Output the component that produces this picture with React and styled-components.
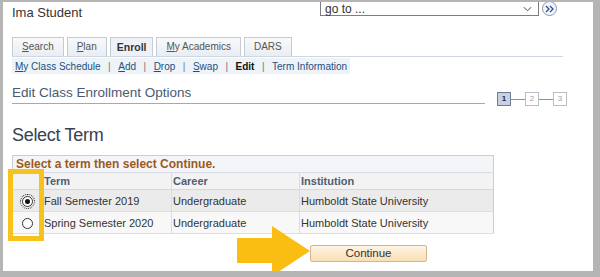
import React from "react";
import styled, { createGlobalStyle } from "styled-components";

const GlobalStyle = createGlobalStyle`
  html, body {
    margin: 0;
    padding: 0;
    background: #ffffff;
  }
  body {
    font-family: "Liberation Sans", Arial, sans-serif;
  }
`;

const TABS = [
  { label: "Search", key: "S" },
  { label: "Plan", key: "P" },
  { label: "Enroll", active: true },
  { label: "My Academics", key: "M" },
  { label: "DARS" },
];

const LINKS = [
  { label: "My Class Schedule", key: "M" },
  { label: "Add", key: "A" },
  { label: "Drop", key: "D" },
  { label: "Swap", key: "S" },
  { label: "Edit", current: true },
  { label: "Term Information" },
];

const TERMS = [
  {
    term: "Fall Semester 2019",
    career: "Undergraduate",
    institution: "Humboldt State University",
    checked: true,
  },
  {
    term: "Spring Semester 2020",
    career: "Undergraduate",
    institution: "Humboldt State University",
  },
];

function AccessLabel({ label, accessKey }) {
  if (!accessKey) return label;
  return (
    <>
      <u>{label.slice(0, 1)}</u>
      {label.slice(1)}
    </>
  );
}

function App() {
  return (
    <>
      <GlobalStyle />
      <Frame>
        <TopBar>
          <UserName>Ima Student</UserName>
          <GoToGroup>
            <GoTo>
              <span>go to ...</span>
              <Chevron viewBox="0 0 10 6">
                <path d="M1 1 L5 5 L9 1" fill="none" stroke="#444" strokeWidth="1.1" />
              </Chevron>
            </GoTo>
            <GoButton>
              <svg width="10" height="8" viewBox="0 0 10 8">
                <path
                  d="M1 1 L4 4 L1 7 M5 1 L8 4 L5 7"
                  fill="none"
                  stroke="#2f4f8f"
                  strokeWidth="1.3"
                />
              </svg>
            </GoButton>
          </GoToGroup>
        </TopBar>

        <TabStrip>
          {TABS.map((t) => (
            <Tab key={t.label} $active={t.active}>
              <AccessLabel label={t.label} accessKey={t.key} />
            </Tab>
          ))}
        </TabStrip>

        <SubNav>
          {LINKS.map((l, i) => (
            <React.Fragment key={l.label}>
              {i > 0 && <Sep>|</Sep>}
              <NavLink $current={l.current}>
                <AccessLabel label={l.label} accessKey={l.key} />
              </NavLink>
            </React.Fragment>
          ))}
        </SubNav>

        <TitleRow>
          <PageTitle>Edit Class Enrollment Options</PageTitle>
          <Steps>
            <Step $active>1</Step>
            <StepLine />
            <Step>2</Step>
            <StepLine />
            <Step>3</Step>
          </Steps>
        </TitleRow>

        <SectionTitle>Select Term</SectionTitle>

        <TermTable>
          <colgroup>
            <col style={{ width: 30 }} />
            <col style={{ width: 129 }} />
            <col style={{ width: 128 }} />
            <col />
          </colgroup>
          <thead>
            <tr>
              <Caption colSpan={4}>Select a term then select Continue.</Caption>
            </tr>
            <tr>
              <Th />
              <Th>Term</Th>
              <Th>Career</Th>
              <Th>Institution</Th>
            </tr>
          </thead>
          <tbody>
            {TERMS.map((r, i) => (
              <Row key={r.term} $odd={i % 2 === 0}>
                <RadioCell>
                  <Radio $checked={r.checked} $focus={r.checked} />
                </RadioCell>
                <Td>{r.term}</Td>
                <Td>{r.career}</Td>
                <Td>{r.institution}</Td>
              </Row>
            ))}
          </tbody>
        </TermTable>

        <ButtonRow>
          <ContinueButton>Continue</ContinueButton>
        </ButtonRow>

        <Highlight />
        <Arrow viewBox="0 0 73 50">
          <polygon points="0,12 35,12 35,0 73,25 35,50 35,37 0,37" fill="#fabd12" />
        </Arrow>
      </Frame>
    </>
  );
}

export default App;

const Frame = styled.div`
  position: relative;
  width: 600px;
  height: 277px;
  box-sizing: border-box;
  border-style: solid;
  border-color: #b5b5b5;
  border-width: 2px 7px 6px 3px;
  padding-left: 9px;
  overflow: hidden;
  color: #333;
`;

const TopBar = styled.div`
  display: flex;
  justify-content: space-between;
  align-items: flex-start;
  height: 20px;
  padding-right: 36px;
`;

const UserName = styled.div`
  font-size: 13px;
  line-height: 16px;
  margin-top: 3px;
  color: #333;
`;

const GoToGroup = styled.div`
  display: flex;
  align-items: center;
  gap: 3px;
  margin-top: -1px;
`;

const GoTo = styled.div`
  display: flex;
  align-items: center;
  justify-content: space-between;
  width: 219px;
  height: 15px;
  box-sizing: border-box;
  border: 1px solid #7d7d7d;
  padding: 0 6px 0 4px;
  font-size: 12px;
  color: #333;
  background: #fff;
`;

const Chevron = styled.svg`
  width: 9px;
  height: 6px;
`;

const GoButton = styled.div`
  display: flex;
  align-items: center;
  justify-content: center;
  width: 15px;
  height: 15px;
  border-radius: 50%;
  border: 1px solid #8a97ad;
  box-sizing: border-box;
  background: #f4f6fa;
`;

const TabStrip = styled.div`
  display: flex;
  gap: 3px;
  width: 551px;
  margin-top: 15px;
  border-bottom: 1px solid #cdd6e1;
`;

const Tab = styled.div`
  height: 19px;
  box-sizing: border-box;
  padding: ${(p) => (p.$active ? "0 6px" : "0 9px")};
  border: 1px solid #c5cbd3;
  border-bottom: none;
  background: ${(p) => (p.$active ? "#eef2f8" : "linear-gradient(#f8f9fb, #e9edf2)")};
  font-size: ${(p) => (p.$active ? "10.5px" : "10px")};
  font-weight: ${(p) => (p.$active ? "bold" : "normal")};
  color: ${(p) => (p.$active ? "#333" : "#555")};
  line-height: 18px;
  white-space: nowrap;
`;

const SubNav = styled.div`
  display: flex;
  align-items: center;
  width: 338px;
  height: 16px;
  margin-top: 1px;
  padding-left: 3px;
  box-sizing: border-box;
  background: #eef3f8;
  font-size: 10px;
  white-space: nowrap;
`;

const NavLink = styled.span`
  color: ${(p) => (p.$current ? "#111" : "#1d4e80")};
  font-weight: ${(p) => (p.$current ? "bold" : "normal")};
`;

const Sep = styled.span`
  color: #777;
  margin: 0 7.5px;
`;

const TitleRow = styled.div`
  display: flex;
  align-items: flex-start;
  margin-top: 11px;
`;

const PageTitle = styled.div`
  width: 473px;
  font-size: 13.5px;
  line-height: 16px;
  padding-bottom: 2px;
  border-bottom: 1px solid #a9a9a9;
  color: #4a5a70;
`;

const Steps = styled.div`
  display: flex;
  align-items: center;
  margin-left: 12px;
  margin-top: 7px;
`;

const Step = styled.div`
  width: 14px;
  height: 14px;
  box-sizing: border-box;
  border: 1px solid ${(p) => (p.$active ? "#6d7b93" : "#b9bec6")};
  background: ${(p) => (p.$active ? "#c7d1e1" : "#fff")};
  color: ${(p) => (p.$active ? "#1c2a44" : "#9aa0a8")};
  font-size: 8px;
  font-weight: ${(p) => (p.$active ? "bold" : "normal")};
  line-height: 12px;
  text-align: center;
`;

const StepLine = styled.div`
  width: 14px;
  height: 1px;
  background: #8d939c;
`;

const SectionTitle = styled.div`
  margin-top: 19px;
  font-size: 18px;
  letter-spacing: -0.3px;
  line-height: 20px;
  color: #37424f;
`;

const TermTable = styled.table`
  width: 482px;
  margin-top: 10px;
  table-layout: fixed;
  border-collapse: collapse;
  border: 1px solid #c9ced5;
  font-size: 11px;
`;

const Caption = styled.th`
  height: 16px;
  padding: 0 0 0 3px;
  text-align: left;
  font-size: 12px;
  font-weight: bold;
  color: #9c5a1c;
  background: #f3f5f8;
  border-bottom: 1px solid #d8dce2;
`;

const Th = styled.th`
  height: 16px;
  padding: 0 0 0 1px;
  text-align: left;
  font-size: 11px;
  font-weight: bold;
  color: #4e5e73;
  background: #f3f3f3;
  border-left: 1px solid #dcdcdc;
  border-bottom: 1px solid #d8d8d8;

  &:first-child {
    border-left: none;
  }
`;

const Row = styled.tr`
  height: 22px;
  background: ${(p) => (p.$odd ? "#ebebeb" : "#f8f8f8")};
  border-bottom: 1px solid #dedede;
`;

const Td = styled.td`
  padding: 0 0 0 1px;
  color: #333;
  border-left: 1px solid #dcdcdc;
  white-space: nowrap;
`;

const RadioCell = styled.td`
  padding: 0;
  text-align: center;
`;

const Radio = styled.span`
  display: inline-block;
  position: relative;
  width: 11px;
  height: 11px;
  box-sizing: border-box;
  border-radius: 50%;
  border: 1px solid #333;
  background: #fff;
  vertical-align: middle;
  outline: ${(p) => (p.$focus ? "1px dotted #222" : "none")};
  outline-offset: 1px;

  &::after {
    content: "";
    display: ${(p) => (p.$checked ? "block" : "none")};
    position: absolute;
    left: 2px;
    top: 2px;
    width: 5px;
    height: 5px;
    border-radius: 50%;
    background: #111;
  }
`;

const ButtonRow = styled.div`
  margin-top: 11px;
  padding-left: 298px;
`;

const ContinueButton = styled.div`
  width: 117px;
  height: 17px;
  box-sizing: border-box;
  border: 1px solid #d3b78c;
  border-radius: 2px;
  background: linear-gradient(#fdf3e3, #f8dfb5);
  font-size: 11.5px;
  line-height: 15px;
  text-align: center;
  color: #333;
`;

const Highlight = styled.div`
  position: absolute;
  left: 5px;
  top: 167px;
  width: 36px;
  height: 72px;
  box-sizing: border-box;
  border: 5px solid #f8c21c;
`;

const Arrow = styled.svg`
  position: absolute;
  left: 234px;
  top: 224px;
  width: 73px;
  height: 50px;
`;
